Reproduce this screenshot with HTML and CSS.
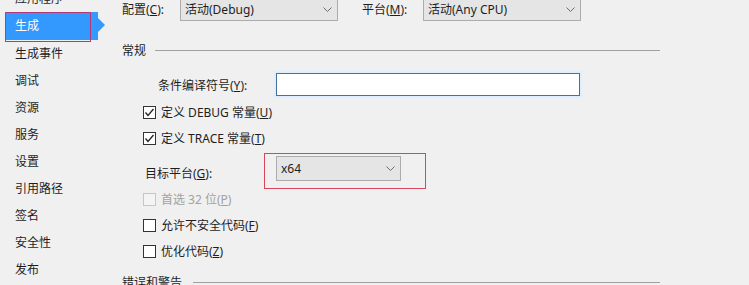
FILE: index.html
```html
<!DOCTYPE html>
<html lang="zh-CN">
<head>
<meta charset="utf-8">
<title>生成</title>
<link rel="stylesheet" href="styles.css">
</head>
<body>
<div class="page">
  <nav class="side">
    <ul class="nav">
      <li>应用程序</li>
      <li class="sel">生成</li>
      <li>生成事件</li>
      <li>调试</li>
      <li>资源</li>
      <li>服务</li>
      <li>设置</li>
      <li>引用路径</li>
      <li>签名</li>
      <li>安全性</li>
      <li>发布</li>
    </ul>
  </nav>
  <main class="main">
    <div class="toprow">
      <span class="lbl lbl-cfg">配置(<u>C</u>):</span>
      <div class="combo combo-top"><span>活动(Debug)</span><svg class="chev" width="9" height="5" viewBox="0 0 9 5"><polyline points="0.5,0.5 4.5,4.5 8.5,0.5" fill="none" stroke="#6d6d6d" stroke-width="1"/></svg></div>
      <span class="lbl lbl-plat">平台(<u>M</u>):</span>
      <div class="combo combo-top"><span>活动(Any CPU)</span><svg class="chev" width="9" height="5" viewBox="0 0 9 5"><polyline points="0.5,0.5 4.5,4.5 8.5,0.5" fill="none" stroke="#6d6d6d" stroke-width="1"/></svg></div>
    </div>
    <div class="sep"></div>
    <div class="group group-general"><span>常规</span><span class="gline"></span></div>
    <div class="row row-input"><span class="lbl lbl-sym">条件编译符号(<u>Y</u>):</span><div class="textbox"></div></div>
    <div class="row chk-row chk-a"><span class="box"><svg width="11" height="11" viewBox="0 0 11 11"><polyline points="1.5,5.5 4,8.5 9.5,2" fill="none" stroke="#222" stroke-width="1.3"/></svg></span><span>定义 DEBUG 常量(<u>U</u>)</span></div>
    <div class="row chk-row chk-b"><span class="box"><svg width="11" height="11" viewBox="0 0 11 11"><polyline points="1.5,5.5 4,8.5 9.5,2" fill="none" stroke="#222" stroke-width="1.3"/></svg></span><span>定义 TRACE 常量(<u>T</u>)</span></div>
    <div class="row row-target">
      <span class="lbl lbl-target">目标平台(<u>G</u>):</span>
      <div class="mark">
        <div class="combo combo-x64"><span>x64</span><svg class="chev" width="9" height="5" viewBox="0 0 9 5"><polyline points="0.5,0.5 4.5,4.5 8.5,0.5" fill="none" stroke="#6d6d6d" stroke-width="1"/></svg></div>
      </div>
    </div>
    <div class="row chk-row chk-c disabled"><span class="box"></span><span>首选 32 位(<u>P</u>)</span></div>
    <div class="row chk-row chk-d"><span class="box"></span><span>允许不安全代码(<u>F</u>)</span></div>
    <div class="row chk-row chk-e"><span class="box"></span><span>优化代码(<u>Z</u>)</span></div>
    <div class="group group-errors"><span>错误和警告</span><span class="gline"></span></div>
  </main>
</div>
</body>
</html>
```

FILE: styles.css
```css
* { box-sizing: border-box; }
html, body {
  margin: 0;
  padding: 0;
  background: #f0f0f0;
  width: 749px;
  height: 285px;
  overflow: hidden;
}
body {
  font-family: "Noto Sans", "Noto Sans CJK SC", sans-serif;
  font-size: 12px;
  color: #1e1e1e;
}
u { text-decoration: underline; text-underline-offset: 1px; }

.page {
  display: flex;
  height: 285px;
}

.side {
  width: 110px;
  flex: none;
}
.nav {
  list-style: none;
  margin: -15px 0 0 0;
  padding: 0;
}
.nav li {
  height: 27px;
  line-height: 27px;
  padding-left: 15px;
  white-space: nowrap;
}
.nav li.sel {
  position: relative;
  margin-left: 5px;
  width: 93px;
  height: 28px;
  line-height: 28px;
  padding-left: 10px;
  background: #3399ff;
  color: #fff;
}
.nav li.sel::after {
  content: "";
  position: absolute;
  left: 93px;
  top: 6px;
  border-left: 7px solid #3399ff;
  border-top: 7px solid transparent;
  border-bottom: 7px solid transparent;
}
.nav li.sel::before {
  content: "";
  position: absolute;
  left: 0;
  top: 0;
  width: 84px;
  height: 28px;
  border: 1px solid #b13a78;
}

.main {
  flex: 1;
  display: flex;
  flex-direction: column;
}

.lbl { white-space: nowrap; }

.toprow {
  display: flex;
  align-items: center;
  height: 24px;
  margin-top: -3px;
  padding-left: 12px;
}
.lbl-cfg { width: 58px; }
.lbl-plat { width: 61px; margin-left: 24px; }

.combo {
  display: flex;
  align-items: center;
  justify-content: space-between;
  background: #e5e5e5;
  border: 1px solid #acacac;
  padding: 0 5px 0 4px;
  white-space: nowrap;
}
.combo-top { width: 158px; height: 24px; }
.combo-x64 { width: 125px; height: 25px; }
.chev { flex: none; }

.sep {
  margin-top: 16px;
  margin-left: 10px;
  height: 1px;
  background: #a0a0a0;
}

.group {
  display: flex;
  align-items: center;
  height: 20px;
  padding-left: 12px;
  white-space: nowrap;
}
.group-general { margin-top: 4px; }
.group-errors { margin-top: 13px; }
.gline {
  height: 1px;
  background: #a0a0a0;
}
.group-general .gline { margin-left: 9px; width: 505px; }
.group-errors .gline { margin-left: 11px; width: 467px; }

.row {
  display: flex;
  align-items: center;
}
.row-input {
  margin-top: 14px;
  height: 23px;
  padding-left: 48px;
}
.lbl-sym { width: 118px; }
.textbox {
  width: 304px;
  height: 23px;
  background: #fff;
  border: 1px solid #4a7094;
  box-shadow: 0 0 2px 2px #ddeeff;
}

.chk-row {
  padding-left: 33px;
  gap: 5px;
  height: 20px;
  white-space: nowrap;
}
.chk-a { margin-top: 7px; }
.chk-b { margin-top: 8px; }
.chk-c { margin-top: 1px; height: 18px; }
.chk-d { margin-top: 8px; height: 18px; }
.chk-e { margin-top: 8px; height: 18px; }
.box {
  width: 13px;
  height: 13px;
  flex: none;
  border: 1px solid #333;
  background: #fff;
  display: flex;
  align-items: center;
  justify-content: center;
}
.disabled { color: #a2a2a2; }
.disabled .box { border-color: #c6c6c6; background: #f4f4f4; }

.row-target {
  margin-top: 6px;
  height: 36px;
  padding-left: 35px;
  align-items: center;
}
.lbl-target { width: 119px; padding-top: 4px; }
.mark {
  width: 162px;
  height: 36px;
  border: 1px solid #d6475c;
  padding: 2px 0 0 11px;
}
```
